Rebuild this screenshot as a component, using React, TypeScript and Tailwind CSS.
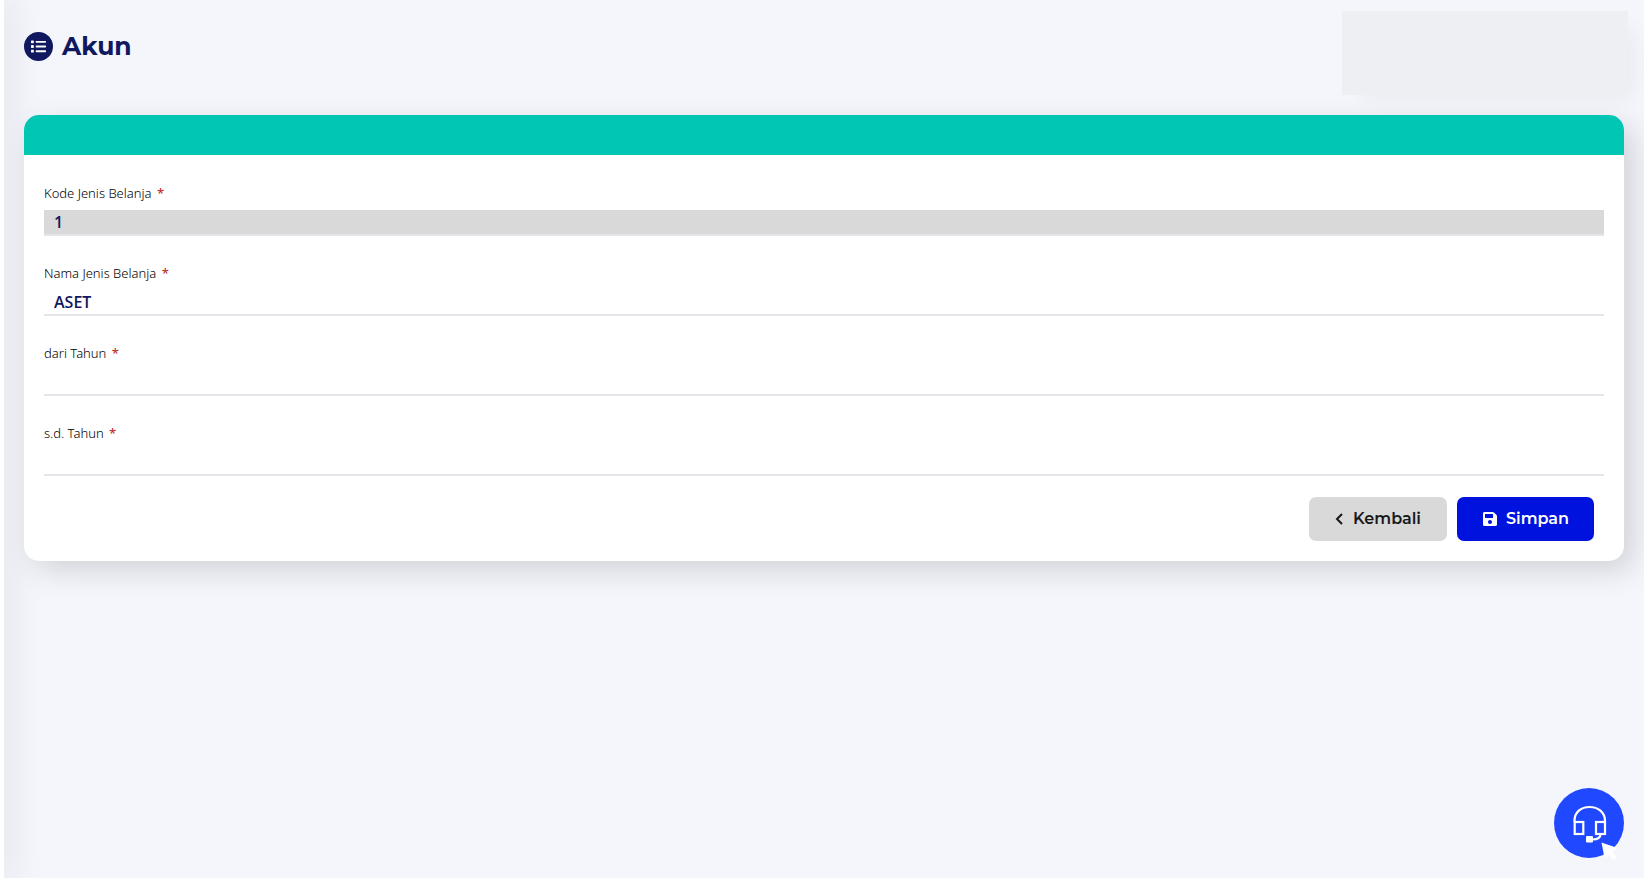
import React from "react";
import { FaSave, FaList } from "react-icons/fa";

type FieldProps = {
  id: string;
  label: string;
  value?: string;
  readOnly?: boolean;
};

function Field({ id, label, value = "", readOnly = false }: FieldProps) {
  return (
    <div className="flex flex-col">
      <label htmlFor={id} className="h-7 font-['Noto_Sans',sans-serif] text-[13px] leading-[22px] font-light text-black">
        {label} <span className="ml-0.5 font-normal text-[#c01818]">*</span>
      </label>
      <input
        id={id}
        defaultValue={value}
        readOnly={readOnly}
        className="h-[26px] w-full border-b-2 border-[#e4e5ea] bg-white px-[10px] text-base font-semibold text-[#101860] outline-none read-only:bg-[#d9d9d9]"
      />
    </div>
  );
}

function HeadsetIcon() {
  return (
    <svg viewBox="0 0 70 70" className="size-[70px] overflow-visible" fill="none" aria-hidden="true">
      <circle cx="35" cy="35" r="35" fill="#2049ff" />
      <g stroke="#fff" strokeWidth="2.2">
        <path d="M20.5 34V33C20.5 24 27 19 35.5 19S51 24 51 33v1" />
        <rect x="20.7" y="34" width="8.6" height="12" />
        <rect x="42" y="34" width="9" height="12" />
        <path d="M46.5 46c0 4-3 5.5-8 5.5" />
      </g>
      <rect x="32" y="48" width="7" height="6.5" rx="1" fill="#fff" />
      <path d="M47.5 54.5 63.5 60 57.5 64 62.5 69 59.5 72 54.5 67 50.5 70z" fill="#fff" />
    </svg>
  );
}

export default function App() {
  return (
    <div className="flex min-h-screen overflow-hidden bg-[#f4f6fb] font-['Open_Sans',sans-serif]">
      <aside className="w-1 shrink-0 bg-white shadow-[0_0_36px_6px_rgba(0,0,0,0.11)]" />
      <main className="flex min-w-0 flex-1 flex-col px-5">
        <header className="flex h-[115px] items-start justify-between">
          <h1 className="mt-7 flex items-center gap-[9px] font-['Montserrat','Inter',sans-serif] text-[25px] leading-9 font-bold text-[#101860]">
            <span className="flex size-[29px] items-center justify-center rounded-full bg-[#101860] text-white">
              <FaList className="size-[15px]" />
            </span>
            Akun
          </h1>
          <div className="-mr-1 mt-[11px] h-[84px] w-[286px] bg-[#eeeff3] shadow-[12px_10px_20px_-8px_rgba(0,0,0,0.06)]" />
        </header>

        <form
          onSubmit={(e) => e.preventDefault()}
          className="rounded-[15px] bg-white shadow-[10px_10px_30px_rgba(0,0,0,0.14)]"
        >
          <div className="h-10 rounded-t-[15px] bg-[#00c6b3]" />
          <div className="flex flex-col gap-[26px] px-5 pt-[27px]">
            <Field id="kode" label="Kode Jenis Belanja" value="1" readOnly />
            <Field id="nama" label="Nama Jenis Belanja" value="ASET" />
            <Field id="dari" label="dari Tahun" />
            <Field id="sampai" label="s.d. Tahun" />
          </div>
          <div className="flex justify-end gap-[10px] px-[30px] pt-[21px] pb-5 font-['Montserrat','Inter',sans-serif] text-base font-semibold">
            <button type="button" className="flex h-11 w-[138px] items-center justify-center gap-[10px] rounded-[7px] bg-[#d9d9d9] text-[#181818]">
              <svg viewBox="0 0 8 12" className="h-3 w-2" fill="none" stroke="currentColor" strokeWidth="2" aria-hidden="true">
                <path d="M7 1 2 6l5 5" />
              </svg>
              Kembali
            </button>
            <button type="submit" className="flex h-11 w-[137px] items-center justify-center gap-2 rounded-[7px] bg-[#0013de] text-white">
              <FaSave className="size-4" />
              Simpan
            </button>
          </div>
        </form>
      </main>
      <button type="button" aria-label="Bantuan" className="fixed right-5 bottom-5 size-[70px]">
        <HeadsetIcon />
      </button>
    </div>
  );
}
